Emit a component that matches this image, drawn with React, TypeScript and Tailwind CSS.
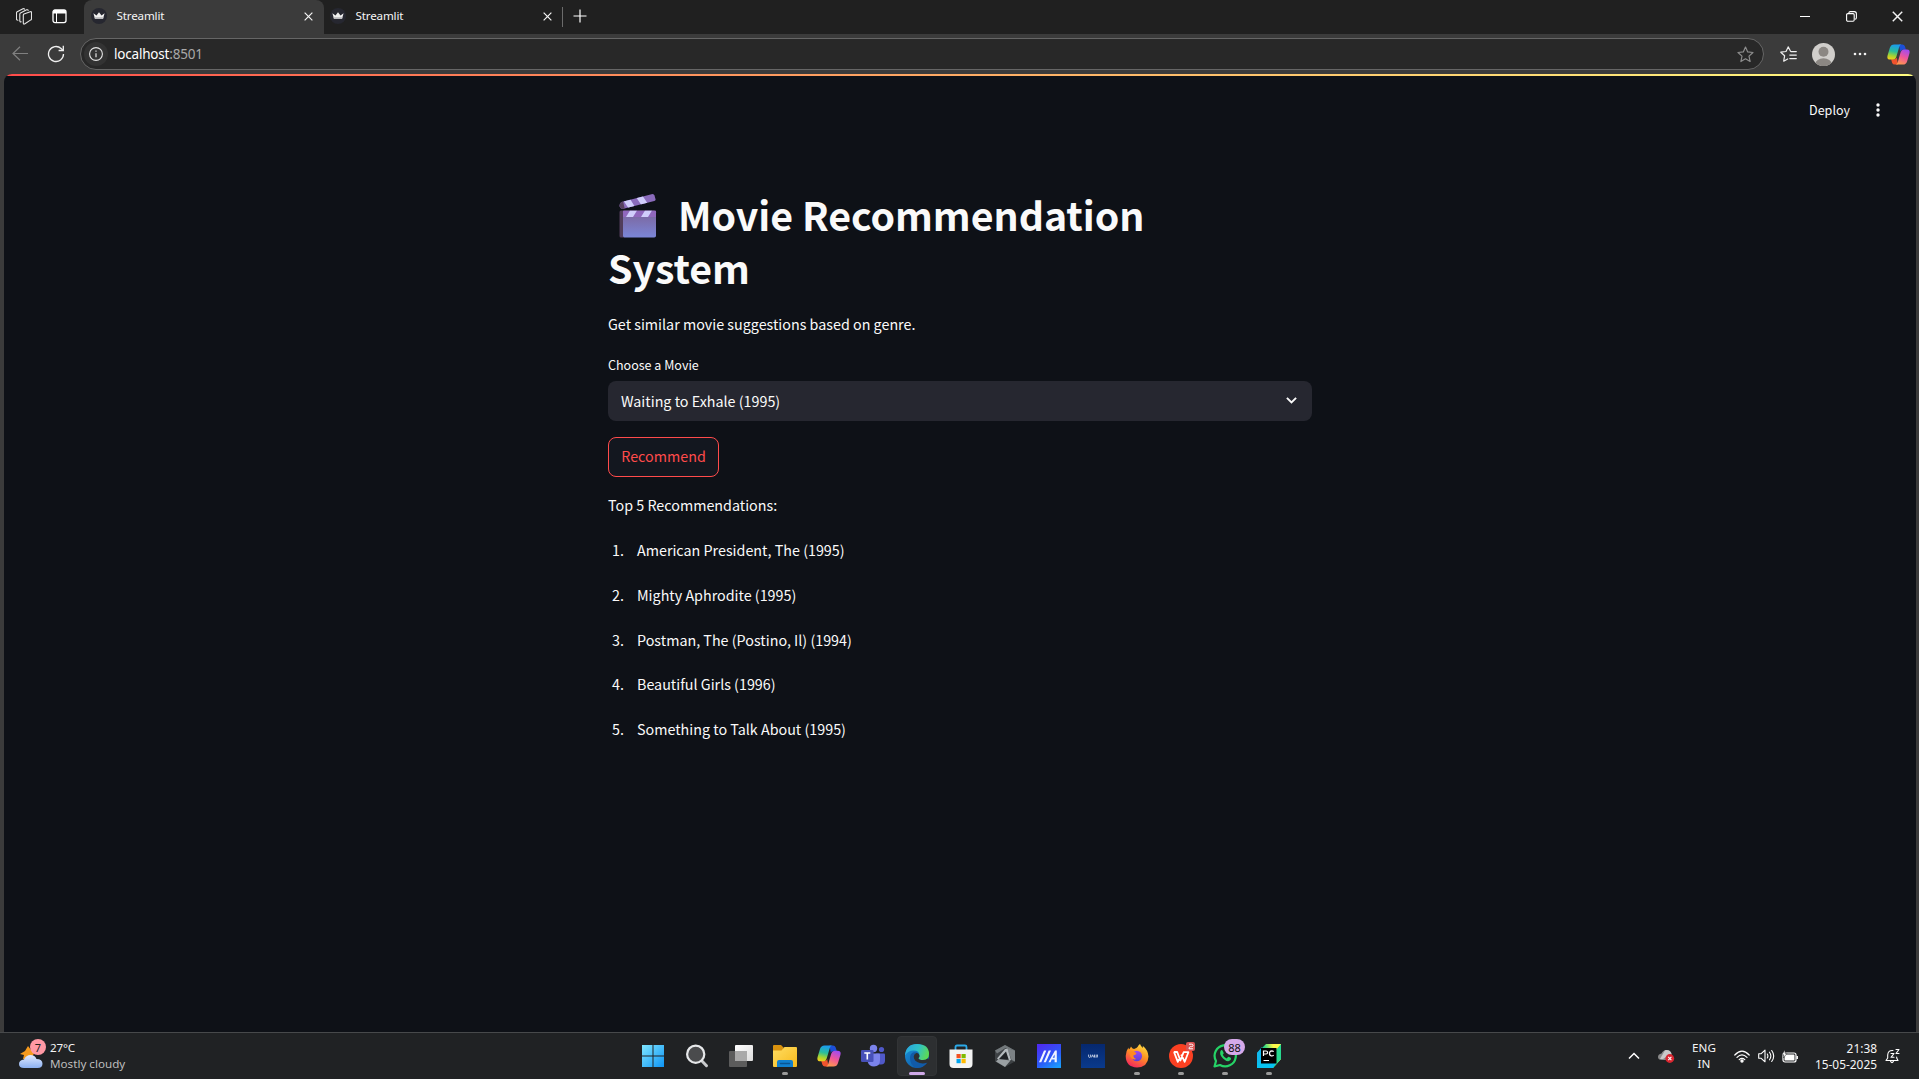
import type { ReactNode } from "react";

const movies = [
  "American President, The (1995)",
  "Mighty Aphrodite (1995)",
  "Postman, The (Postino, Il) (1994)",
  "Beautiful Girls (1996)",
  "Something to Talk About (1995)",
];

function StreamlitFavicon() {
  return (
    <svg width="16" height="16" viewBox="0 0 16 16" className="shrink-0">
      <circle cx="8" cy="8" r="8" fill="#262730" />
      <path d="M2.4 5.2 5.5 7.4 8 4.2l2.5 3.2 3.1-2.2-1.5 5.2q-.1.5-.6.5h-7q-.5 0-.6-.5Z" fill="#f0f0f0" />
      <path d="M3.4 9.2h9.2l-.4 1.4q-.1.3-.6.3H4.4q-.5 0-.6-.3Z" fill="#b9b9bd" />
    </svg>
  );
}

function CloseGlyph({ size = 9 }: { size?: number }) {
  return (
    <svg width={size} height={size} viewBox="0 0 10 10" className="shrink-0">
      <path d="M.7.7l8.6 8.6M9.3.7.7 9.3" stroke="#f4f4f4" strokeWidth="1.3" fill="none" />
    </svg>
  );
}

function Tab({ active }: { active?: boolean }) {
  return (
    <div
      className={
        active
          ? "flex h-[34px] w-[240px] items-center rounded-t-lg bg-[#3b3b3b] pb-[2px] pl-[7px] pr-[11px]"
          : "flex h-[34px] w-[238px] items-center pb-[2px] pl-[6px] pr-[10px]"
      }
    >
      <StreamlitFavicon />
      <span className="ml-[9.500px] flex-1 text-[11.600px] leading-4 tracking-[-0.150px] text-[#f5f5f5]">Streamlit</span>
      <CloseGlyph />
    </div>
  );
}

function TitleBar() {
  return (
    <div className="flex h-[34px] items-center bg-[#202020]">
      <div className="flex w-[84px] shrink-0 items-center pb-[2px] pl-4">
        <svg width="16" height="17" viewBox="0 0 16 17" fill="none" stroke="#e6e6e6" strokeWidth="1.1" strokeLinejoin="round" strokeLinecap="round">
          <path d="M7.3 7.2q0-.8.7-1.1l6.3-2.4q1.2-.4 1.2.8v6.2q0 .8-.7 1.2l-5.900 3.900q-1.600.9-1.600-.7Z" />
          <path d="M5.200 13.800q-1.400.4-1.400-1V6.100q0-.8.7-1.200L10.600 1.800q1.200-.4 1.500.6" />
          <path d="M1.900 12.200q-1.400 0-1.400-1.200V5q0-.8.7-1.200L7 .8q1-.4 1.500.3" />
        </svg>
        <svg width="15" height="15" viewBox="0 0 15 15" className="ml-[20px]">
          <rect x="1" y="1" width="13" height="12.600" rx="2" fill="none" stroke="#fff" strokeWidth="1.300" />
          <path d="M1 3q0-2 2-2h9q2 0 2 2v1.500H1Z" fill="#fff" />
          <path d="M4.500 4v9.500" stroke="#fff" strokeWidth="1" />
        </svg>
      </div>
      <Tab active />
      <Tab />
      <div className="-mt-[1px] h-5 w-px bg-[#6b6b6b]" />
      <svg width="14" height="14" viewBox="0 0 14 14" className="-mt-[2px] ml-[10px]">
        <path d="M7 .5v13M.5 7h13" stroke="#fff" strokeWidth="1.200" />
      </svg>
      <div className="ml-auto flex items-center pb-[1px] pr-[16.500px]">
        <svg width="10" height="10" viewBox="0 0 10 10">
          <path d="M0 4.500h10" stroke="#fff" strokeWidth="1" />
        </svg>
        <svg width="11" height="11" viewBox="0 0 11 11" className="ml-[36px]" fill="none" stroke="#fff" strokeWidth="1.100">
          <rect x=".6" y="2.600" width="7.600" height="7.600" rx="1.200" />
          <path d="M2.800 2.300V2Q2.900.6 4.300.6h4Q10.400.6 10.400 2.700v4q0 1.300-1.500 1.500" />
        </svg>
        <span className="ml-[35px] flex">
          <CloseGlyph size={11} />
        </span>
      </div>
    </div>
  );
}

function Copilot({ size }: { size: number }) {
  return (
    <svg width={size} height={size} viewBox="0 0 24 24" className="shrink-0">
      <defs>
        <linearGradient id="cpA" x1="0.5" y1="0" x2="0.3" y2="1">
          <stop offset="0" stopColor="#1a9bf0" />
          <stop offset=".45" stopColor="#2bbd9a" />
          <stop offset=".75" stopColor="#a5d332" />
          <stop offset="1" stopColor="#f7cf1b" />
        </linearGradient>
        <linearGradient id="cpB" x1="0.7" y1="0" x2="0.3" y2="1">
          <stop offset="0" stopColor="#a24bf0" />
          <stop offset=".5" stopColor="#f0569a" />
          <stop offset="1" stopColor="#ff9a4c" />
        </linearGradient>
      </defs>
      <path d="M12.500 1.500H16q2 0 2.700 2l1.100 3.500h-3.300q-2 0-2.700 2Z" fill="#1c4fd8" />
      <path d="M11.500 22.500H8q-2 0-2.700-2L4.300 17h3.200q2 0 2.700-2Z" fill="#f0532d" />
      <path d="M7.500 1.500H15q-1.600.4-2.200 2.500L9.700 14.500q-.8 2.800-3.200 2.800H3.200Q-.5 17.300.6 13L3 5q1-3.500 4.500-3.500Z" fill="url(#cpA)" />
      <path d="M16.500 22.500H9q1.600-.4 2.200-2.500l3.100-10.500q.8-2.800 3.200-2.800h3.300q3.700 0 2.600 4.300L21 19q-1 3.500-4.500 3.500Z" fill="url(#cpB)" />
    </svg>
  );
}

function AddressBar() {
  return (
    <div className="flex h-10 items-center bg-[#3b3b3b]">
      <svg width="17" height="16" viewBox="0 0 17 16" className="ml-[12px]" fill="none" stroke="#808080" strokeWidth="1.200">
        <path d="M16 7.500H1M8 .8 1 7.500l7 6.700" />
      </svg>
      <svg width="18" height="18" viewBox="0 0 18 18" className="ml-[18px]" fill="none" stroke="#f0f0f0" strokeWidth="1.300">
        <path d="M16.500 9a7.500 7.500 0 1 1-2.400-5.500l1.900 1.900" />
        <path d="M16.300.8v4.700h-4.700" />
      </svg>
      <div className="ml-[15px] flex h-8 w-[1684px] items-center rounded-full border border-[#666] bg-[#282828] pl-[3px]">
        <div className="flex size-6 items-center justify-center rounded-full bg-[#333]">
          <svg width="14" height="14" viewBox="0 0 14 14">
            <circle cx="7" cy="7" r="6.400" fill="none" stroke="#e4e4e4" strokeWidth="1.100" />
            <path d="M7 6.200v4M7 3.600v1.200" stroke="#e4e4e4" strokeWidth="1.200" />
          </svg>
        </div>
        <span className="ml-[6px] text-[13.500px] leading-5 tracking-[-0.200px] text-white">
          localhost<span className="text-[#a8a8a8]">:8501</span>
        </span>
        <svg width="17" height="17" viewBox="0 0 17 17" className="ml-auto mr-[9.500px]" fill="none" stroke="#8d8d8d" strokeWidth="1.200" strokeLinejoin="round">
          <path d="m8.500 1 2.200 4.900 5.300.6-4 3.600 1.100 5.400-4.600-2.700-4.600 2.700L5 10.100 1 6.500l5.300-.6Z" />
        </svg>
      </div>
      <svg width="17" height="17" viewBox="0 0 17 17" className="ml-[15.500px]" fill="none" stroke="#f0f0f0" strokeWidth="1.200" strokeLinejoin="round" strokeLinecap="round">
        <path d="M10.400 5 8.200.9 6 5.500l-5.200.7 3.800 3.600-.9 5.400 4-2.200M11 5.600h5.300M9.800 9.100h6.500M9.800 12.600h6.500" />
      </svg>
      <svg width="23" height="23" viewBox="0 0 24 24" className="ml-[15.500px]">
        <defs>
          <clipPath id="avatarClip">
            <circle cx="12" cy="12" r="12" />
          </clipPath>
        </defs>
        <g clipPath="url(#avatarClip)">
          <rect width="24" height="24" fill="#d0cecb" />
          <circle cx="12" cy="9.200" r="5.200" fill="#8b8783" />
          <ellipse cx="12" cy="21.500" rx="8.500" ry="5.500" fill="#8b8783" />
        </g>
      </svg>
      <svg width="14" height="4" viewBox="0 0 14 4" className="ml-[18px]" fill="#f2f2f2">
        <circle cx="2" cy="2" r="1.300" />
        <circle cx="7" cy="2" r="1.300" />
        <circle cx="12" cy="2" r="1.300" />
      </svg>
      <span className="ml-[19.500px] flex">
        <Copilot size={23} />
      </span>
    </div>
  );
}

function Clapper() {
  return (
    <svg width="38" height="44" viewBox="0 0 38 44" className="ml-[11px] mr-[21px] mt-[6px] inline-block align-top">
      <defs>
        <linearGradient id="slate" x1="0" y1="0" x2="0" y2="1">
          <stop offset="0" stopColor="#7c6397" />
          <stop offset="1" stopColor="#7b86d8" />
        </linearGradient>
        <clipPath id="armClip">
          <path d="M2.500 8 32.500.2q2-.4 3 1.300l1 3.500q.3 1.500-1.200 2L3.500 15Q.5 14 .5 11.500T2.500 8Z" />
        </clipPath>
        <clipPath id="barClip">
          <rect x="4" y="16.500" width="33" height="6.500" />
        </clipPath>
      </defs>
      <g clipPath="url(#armClip)">
        <rect width="38" height="16" fill="#8a6bbb" />
        <path d="M0 7h4l2 9H0Z" fill="#56405f" />
        <path d="m4 6 6.500-2 5.500 9L10 15ZM17 3l6-2 6 9-6 2Z" fill="#d0cdfb" />
      </g>
      <rect x=".5" y="16.500" width="6" height="27" rx="1.500" fill="#513d5b" />
      <rect x="4" y="16.500" width="33" height="27" rx="1.800" fill="url(#slate)" />
      <g clipPath="url(#barClip)">
        <rect x="4" y="16.500" width="33" height="6.500" fill="#9068bd" />
        <path d="m11 16.500h7l-4 6.500H7ZM26 16.500h7l-4 6.500h-7Z" fill="#d0cdfb" />
      </g>
    </svg>
  );
}

function StreamlitApp() {
  return (
    <main className="h-[958px] overflow-hidden bg-[#3b3b3b] pl-[4px] pr-[3px] font-['Noto_Sans_CJK_SC',sans-serif] text-[14.320px] text-[#fafafa]">
      <div className="h-full overflow-hidden rounded-t-lg bg-[#0e1117]">
        <div className="h-[2px] bg-linear-to-r from-[#ff4b4b] to-[#fffd80]" />
        <header className="flex h-[68px] items-center justify-end pr-[36px]">
          <span className="text-[12.530px] leading-5">Deploy</span>
          <svg width="4" height="14" viewBox="0 0 4 14" className="ml-[26px]" fill="#fafafa">
            <circle cx="2" cy="2" r="1.700" />
            <circle cx="2" cy="7" r="1.700" />
            <circle cx="2" cy="12" r="1.700" />
          </svg>
        </header>
        <section className="ml-[604px] mt-[44.400px] w-[704px]">
          <h1 className="text-[39.300px] font-bold leading-[52.800px] tracking-[-0.040px] text-[#fafafa]">
            <Clapper />
            Movie Recommendation
            <br />
            System
          </h1>
          <p className="mt-[17px] leading-[25.600px]">Get similar movie suggestions based on genre.</p>
          <label className="mt-[17px] block text-[12.530px] leading-[22.400px]">Choose a Movie</label>
          <div className="mt-[5px] flex h-10 items-center justify-between rounded-lg bg-[#262730] pl-[13px] pr-[15.500px]">
            <span>Waiting to Exhale (1995)</span>
            <svg width="11" height="7" viewBox="0 0 11 7" fill="none" stroke="#fafafa" strokeWidth="1.900">
              <path d="m.9.9 4.600 4.600L10.100.9" />
            </svg>
          </div>
          <button className="mt-4 flex h-10 w-[111px] items-center justify-center rounded-lg border border-[#ff4b4b] bg-[#13171f] pb-[2px] text-[#ff4b4b]">
            Recommend
          </button>
          <p className="mt-[15px] leading-[25.600px]">Top 5 Recommendations:</p>
          <ol className="mt-[19.500px] flex flex-col gap-[19.200px]">
            {movies.map((movie, i) => (
              <li key={movie} className="flex leading-[25.600px]">
                <span className="w-[29px] pl-[4px]">{i + 1}.</span>
                <span>{movie}</span>
              </li>
            ))}
          </ol>
        </section>
      </div>
    </main>
  );
}

function Slot({ children, running, active }: { children: ReactNode; running?: boolean; active?: boolean }) {
  return (
    <div className="flex w-11 justify-center">
      <div
        className={
          active
            ? "relative flex size-10 items-center justify-center rounded-[4px] border border-[#323436] bg-[#2d2f31]"
            : "relative flex size-10 items-center justify-center"
        }
      >
        {children}
        {running && <span className="absolute bottom-[1px] left-[17px] h-[3px] w-[6px] rounded-full bg-[#9a9a9a]" />}
        {active && <span className="absolute bottom-0 left-[11px] h-[3px] w-4 rounded-full bg-[#cfa9e8]" />}
      </div>
    </div>
  );
}

function TaskbarIcons() {
  return (
    <div className="flex items-center">
      <Slot>
        <svg width="24" height="24" viewBox="0 0 24 24" className="-ml-px">
          <defs>
            <linearGradient id="win" x1="0" y1="0" x2="1" y2="1">
              <stop offset="0" stopColor="#7fe6ff" />
              <stop offset="1" stopColor="#0e94f5" />
            </linearGradient>
          </defs>
          <path d="M1 1h10.500v10.500H1ZM12.500 1H23v10.500H12.500ZM1 12.500h10.500V23H1ZM12.500 12.500H23V23H12.500Z" fill="url(#win)" />
        </svg>
      </Slot>
      <Slot>
        <svg width="24" height="24" viewBox="0 0 24 24">
          <path d="m16.500 16.500 5 5.200" stroke="#c9cbcd" strokeWidth="3" strokeLinecap="round" />
          <circle cx="10.700" cy="10.200" r="8.600" fill="#4a4b4d" stroke="#e6e8ea" strokeWidth="2.200" />
        </svg>
      </Slot>
      <Slot>
        <svg width="24" height="24" viewBox="0 0 24 24">
          <defs>
            <linearGradient id="tv" x1="0" y1="0" x2="1" y2="1">
              <stop offset="0" stopColor="#fff" />
              <stop offset="1" stopColor="#dcdcdc" />
            </linearGradient>
          </defs>
          <rect x="6" y="1" width="18" height="16" rx="1" fill="url(#tv)" />
          <rect x="0" y="7" width="18" height="16" rx="1" fill="#5c5c5c" />
          <path d="M6 7h12v10H6Z" fill="#a9a9a9" />
        </svg>
      </Slot>
      <Slot running>
        <svg width="24" height="24" viewBox="0 0 24 24">
          <defs>
            <linearGradient id="folder" x1="0" y1="0" x2="1" y2="1">
              <stop offset="0" stopColor="#ffdd62" />
              <stop offset="1" stopColor="#f7b91b" />
            </linearGradient>
          </defs>
          <path d="M0 2q0-1 1-1h7l2.500 2.500V9H0Z" fill="#d9920e" />
          <path d="M0 6.500h8.500L11.500 3H23q1 0 1 1v18q0 1-1 1H1q-1 0-1-1Z" fill="url(#folder)" />
          <path d="M4 23v-5q0-2 2-2h12q2 0 2 2v5Z" fill="#1180cf" />
          <path d="M7.500 19.500h9" stroke="#0a5593" strokeWidth="1.500" strokeLinecap="round" />
        </svg>
      </Slot>
      <Slot>
        <Copilot size={24} />
      </Slot>
      <Slot>
        <svg width="24" height="24" viewBox="0 0 24 24">
          <circle cx="20.500" cy="5.500" r="2.600" fill="#5059c9" />
          <path d="M15 9.500h8q1 0 1 1v6q0 4-4 4h-3Z" fill="#5059c9" />
          <circle cx="12.500" cy="4.500" r="3.700" fill="#7b83eb" />
          <path d="M6.500 9.500H18q1 0 1 1V16q0 6.500-6 6.500-5 0-6.500-5Z" fill="#7b83eb" />
          <rect x="0" y="6" width="12.500" height="12" rx="1.200" fill="#4750b8" />
          <path d="M3.300 9h6M6.300 9v6.500" stroke="#fff" strokeWidth="1.600" />
        </svg>
      </Slot>
      <Slot active>
        <svg width="24" height="24" viewBox="0 0 24 24">
          <defs>
            <linearGradient id="edgeTop" x1="0" y1="0.3" x2="1" y2="0.6">
              <stop offset="0" stopColor="#2aa7e0" />
              <stop offset=".5" stopColor="#2fc2c8" />
              <stop offset="1" stopColor="#5fdc4e" />
            </linearGradient>
            <linearGradient id="edgeLow" x1="0" y1="0" x2="1" y2="1">
              <stop offset="0" stopColor="#1a94dd" />
              <stop offset="1" stopColor="#0c4c97" />
            </linearGradient>
          </defs>
          <circle cx="12" cy="12" r="12" fill="url(#edgeLow)" />
          <path d="M0 11.500Q1 0 12 0q12 0 12 10 0 6-6 6-4.500 0-4.500-2 1-.8 1-2.300Q14.500 6.500 8.500 6.500 3 6.500 0 11.500Z" fill="url(#edgeTop)" />
          <path d="M8.500 12.500q.5-3 3-4-1-.5-2.700-.3Q5 9.500 5 14q0 6.500 5.500 9.700Q17 25 21.800 19q.3-.8-.6-.4Q18 20 14.700 19 9 17.500 8.500 12.500Z" fill="#125ba8" />
          <path d="M8.600 12.500q.5-3 3.200-3.800 2.700 1 2.700 3.300 0 1-1 2-.3 2 4.500 2 3 0 4.500-1.500l2 1.500-2.500 2.800Q18 20 14.700 19 9 17.500 8.600 12.500Z" fill="#2d2f31" />
        </svg>
      </Slot>
      <Slot>
        <svg width="24" height="24" viewBox="0 0 24 24">
          <path d="M6.500 7V3q0-1.500 1.500-1.500h8q1.500 0 1.500 1.500v4" fill="none" stroke="#2aa9e8" strokeWidth="1.800" />
          <path d="M.5 5.500h23V20q0 4-4 4h-15q-4 0-4-4Z" fill="#f3f3f3" />
          <path d="M7.500 10h4.200v4.200H7.500Z" fill="#f25022" />
          <path d="M12.500 10h4.200v4.200h-4.200Z" fill="#7fba00" />
          <path d="M7.500 15h4.200v4.200H7.500Z" fill="#00a4ef" />
          <path d="M12.500 15h4.200v4.200h-4.200Z" fill="#ffb900" />
        </svg>
      </Slot>
      <Slot>
        <svg width="24" height="24" viewBox="0 0 24 24">
          <path d="M12 1 22 6.500v11L12 23 2 17.500v-11Z" fill="#3d4144" />
          <path d="M12 1 2 6.500l2 3L12.500 4l9.500 2.500Z" fill="#72787b" />
          <path d="M14 4 22 6.500v11l-3.500-1.500Z" fill="#7c8285" />
          <path d="M13 5 5.500 15.500 17 15Z" fill="#202326" />
          <path d="M3 17.500 5.500 15 17.500 16.500 12 23Z" fill="#9aa0a3" />
          <path d="m12 5 2.500-.5 3.500 11.500-2 .5L13 7.500 5.500 15.500 4 14.500Z" fill="#b4babd" />
        </svg>
      </Slot>
      <Slot>
        <svg width="24" height="24" viewBox="0 0 24 24">
          <defs>
            <linearGradient id="ma" x1="0.2" y1="0" x2="0.8" y2="1">
              <stop offset="0" stopColor="#4d2cf2" />
              <stop offset=".6" stopColor="#2b5cf8" />
              <stop offset="1" stopColor="#1b9bfb" />
            </linearGradient>
          </defs>
          <rect width="24" height="24" fill="url(#ma)" />
          <path d="M2 18.200 7 6.500h2.300L4.300 18.200ZM6.600 18.200 11.700 6.500H14L8.900 18.200ZM11.400 18.200 18 6.500h1.800V18.200h-2.200v-2.600h-2.900l-1.100 2.600Z" fill="#f0f3ff" />
          <path d="m15.700 13.800 1.900-3.400v3.400Z" fill="#315ff5" />
        </svg>
      </Slot>
      <Slot>
        <div className="flex size-6 items-center justify-center bg-linear-to-b from-[#06286e] to-[#0a3a8c]">
          <svg width="10" height="4" viewBox="0 0 10 4" fill="none" stroke="#cfd8ea" strokeWidth=".9">
            <path d="M.6.6v1.800q0 1 1 1t1-1V.6M3.500 3.400 4.600.8l1 2.600M6.500.6v2.600h1M8.200.6v1.800q0 .9.8.9t.6-1V.6" />
          </svg>
        </div>
      </Slot>
      <Slot running>
        <svg width="24" height="24" viewBox="0 0 24 24">
          <defs>
            <linearGradient id="ff" x1="0.8" y1="0" x2="0.3" y2="1">
              <stop offset="0" stopColor="#ffe243" />
              <stop offset=".45" stopColor="#ff9422" />
              <stop offset="1" stopColor="#f5245e" />
            </linearGradient>
            <linearGradient id="ffb" x1="0.5" y1="0" x2="0.5" y2="1">
              <stop offset="0" stopColor="#a14bf0" />
              <stop offset="1" stopColor="#5b3fd8" />
            </linearGradient>
          </defs>
          <path d="M15 0q.5 2 3 4 0-1.500-.3-2.200Q23 6 23.500 12.500 23 23 12 23.500 1 23 .7 12 .8 7 3.500 3.500q0 1.500.5 2Q5.500 4 6 2.500 7 4.500 9 5q3-1 3.500-2Q13.500.8 15 0Z" fill="url(#ff)" />
          <circle cx="11.800" cy="12" r="5.300" fill="url(#ffb)" />
          <path d="M4 8q3-1 6 0l1.500 1.500q-.8 1.500-3 1.700-.5 2.800 3 3.800-4 1.500-6-2Z" fill="#ff8a20" />
        </svg>
      </Slot>
      <Slot running>
        <svg width="24" height="24" viewBox="0 0 24 24">
          <circle cx="12" cy="12" r="12" fill="#fb4022" />
          <path d="M4.800 8h3.400l3.200 8.500L14.600 8.200h4.800L15.700 17.800 12.200 10.500M5 8l3.800 9.800 2.200-4.500" fill="none" stroke="#fff" strokeWidth="1.800" strokeLinejoin="round" />
        </svg>
        <span className="absolute left-[25px] top-[6px] flex h-[9px] w-[9px] items-center justify-center rounded-[2px] bg-[#d95454]">
          <svg width="6" height="7" viewBox="0 0 6 7" fill="none" stroke="#fff" strokeWidth="1">
            <path d="M1 1.200h2.500Q5 1.200 5 2.500T3.500 3.700H2.300Q1 3.900 1 5.800h4" />
          </svg>
        </span>
      </Slot>
      <Slot running>
        <svg width="24" height="24" viewBox="0 0 24 24">
          <path d="M1.500 22.500 3 17A10.600 10.600 0 1 1 7 21Z" fill="none" stroke="#25d366" strokeWidth="2.200" strokeLinejoin="round" />
          <path d="M7.500 7q1-1.500 2-.5l1.200 2.500q.2.700-1 1.800 1.300 2.600 4 3.600l1.300-1.500q.5-.3 3 1.200.5 2.200-2 3-2.500.7-6-2.600Q6 10.500 7.500 7Z" fill="#25d366" />
        </svg>
        <span className="absolute left-[19px] top-[3px] flex h-[16px] w-[21px] items-center justify-center rounded-full bg-[#d5a9ea] text-[11px] leading-none text-[#111]">
          88
        </span>
      </Slot>
      <Slot running>
        <svg width="24" height="24" viewBox="0 0 24 24">
          <defs>
            <linearGradient id="pc" x1="0" y1="0.7" x2="1" y2="0.3">
              <stop offset="0" stopColor="#0cc3f5" />
              <stop offset=".45" stopColor="#21d789" />
              <stop offset=".8" stopColor="#fcf84a" />
            </linearGradient>
          </defs>
          <path d="M9 0h15v15l-8 9H0V9Z" fill="url(#pc)" />
          <path d="M0 9 5 3v16l-5 5Z" fill="#10b9ee" />
          <path d="M19 6 24 0v15l-8 9H5l14-5Z" fill="#27d98f" />
          <path d="M0 24v-5h19l-3 5Z" fill="#07c3f2" />
          <rect x="4" y="4" width="15.500" height="15.500" fill="#000" />
          <path d="M6.500 12V7H9q1.600 0 1.600 1.500T9 10H6.500M16.700 7.700q-.8-.8-1.900-.8-2.300.2-2.300 2.600 0 2.300 2.300 2.500 1.100 0 1.900-.8M6.500 16.500H12" fill="none" stroke="#fff" strokeWidth="1.200" />
        </svg>
      </Slot>
    </div>
  );
}

function Taskbar() {
  return (
    <footer className="flex h-[47px] items-center border-t border-[#47494b] bg-[#202224] text-[#f5f5f5]">
      <div className="flex w-[631px] items-center pl-[18px]">
        <div className="relative">
          <svg width="28" height="30" viewBox="0 0 28 30">
            <defs>
              <linearGradient id="cloud" x1="0" y1="0" x2="0" y2="1">
                <stop offset="0" stopColor="#e1eaff" />
                <stop offset="1" stopColor="#8cb0f0" />
              </linearGradient>
            </defs>
            <path d="m10 5 3 4 4 2-5 8-7-1 1-4-4-1 5-3Z" fill="#f59a1d" />
            <path d="M6 27q-5 0-5-4T6 18.500q2-4.500 6.500-4.500t6 4q6 0 6 4.800 0 4.200-5 4.200Z" fill="url(#cloud)" />
          </svg>
          <span className="absolute -top-[2px] left-[12px] flex size-4 items-center justify-center rounded-full bg-[#ff99a4] text-[11px] leading-none text-[#222]">
            7
          </span>
        </div>
        <div className="ml-[4px] text-[11.650px] leading-4">
          <div className="tracking-[-0.150px]">27°C</div>
          <div className="text-[#bdbdbd]">Mostly cloudy</div>
        </div>
      </div>
      <TaskbarIcons />
      <div className="ml-auto flex items-center pr-[19px]">
        <svg width="12" height="8" viewBox="0 0 12 8" fill="none" stroke="#fff" strokeWidth="1.500">
          <path d="m1 6.500 5-5 5 5" />
        </svg>
        <svg width="17" height="14" viewBox="0 0 17 14" className="ml-[18px]">
          <path d="M4 11q-4 0-4-3t3.500-3.500Q5 1 8.500 1q3.500 0 5 3.500L15 11Z" fill="#8a8a8a" />
          <path d="M7 1.200Q12 .5 13.500 4.500L5 10H2Z" fill="#c9c9c9" />
          <circle cx="11.800" cy="9.500" r="4.400" fill="#d9252f" />
          <path d="m10.200 7.900 3.200 3.200m0-3.200-3.200 3.200" stroke="#fff" strokeWidth="1.100" />
        </svg>
        <div className="ml-[13px] w-[32px] text-center text-[11.650px] leading-4">
          <div>ENG</div>
          <div>IN</div>
        </div>
        <svg width="16" height="13" viewBox="0 0 16 13" className="ml-[14px]" fill="none" stroke="#fff" strokeWidth="1.200" strokeLinecap="round">
          <path d="M.8 5Q8-2.600 15.200 5M3 7.400q5-5 10 0M5.200 9.600q2.800-2.600 5.600 0" />
          <circle cx="8" cy="11" r="1.100" fill="#fff" />
        </svg>
        <svg width="17" height="14" viewBox="0 0 17 14" className="ml-[7.500px]" fill="none" stroke="#fff" strokeWidth="1.100" strokeLinejoin="round" strokeLinecap="round">
          <path d="M.7 4.700h2.500L7 1.200v11.600L3.200 9.300H.7ZM9.300 5q1.200 2 0 4M11.500 3.200q2.700 3.800 0 7.600M13.700 1.500q4 5.500 0 11" />
        </svg>
        <svg width="18" height="13" viewBox="0 0 18 13" className="ml-[6.500px]">
          <rect x="2" y="3" width="13" height="9" rx="2" fill="none" stroke="#fff" strokeWidth="1.200" />
          <rect x="3.500" y="4.500" width="10" height="6" rx=".6" fill="#fff" />
          <path d="M16.200 6v3" stroke="#fff" strokeWidth="1.500" />
          <path d="M4 0 .8 4.800h2L2.500 8 6 3.300H4Z" fill="#fff" stroke="#202224" strokeWidth=".5" />
        </svg>
        <div className="ml-[14px] w-[64px] whitespace-nowrap text-right text-[11.900px] leading-4">
          <div>21:38</div>
          <div>15-05-2025</div>
        </div>
        <svg width="15" height="16" viewBox="0 0 15 16" className="ml-[8px]" fill="none" stroke="#fff" strokeWidth="1.100" strokeLinecap="round" strokeLinejoin="round">
          <path d="M8 2.500Q3 2 2.700 7v3L1 12.500h12L11.700 10V9M5.500 13q1.500 3.500 3 0" />
          <path d="M6 5.500h3L6 9.300h3M11 1.500h3L11 5.500h3" />
        </svg>
      </div>
    </footer>
  );
}

export default function App() {
  return (
    <div className="flex h-[1079px] w-[1919px] flex-col overflow-hidden bg-[#3b3b3b] font-['Noto_Sans',sans-serif]">
      <TitleBar />
      <AddressBar />
      <StreamlitApp />
      <Taskbar />
    </div>
  );
}
